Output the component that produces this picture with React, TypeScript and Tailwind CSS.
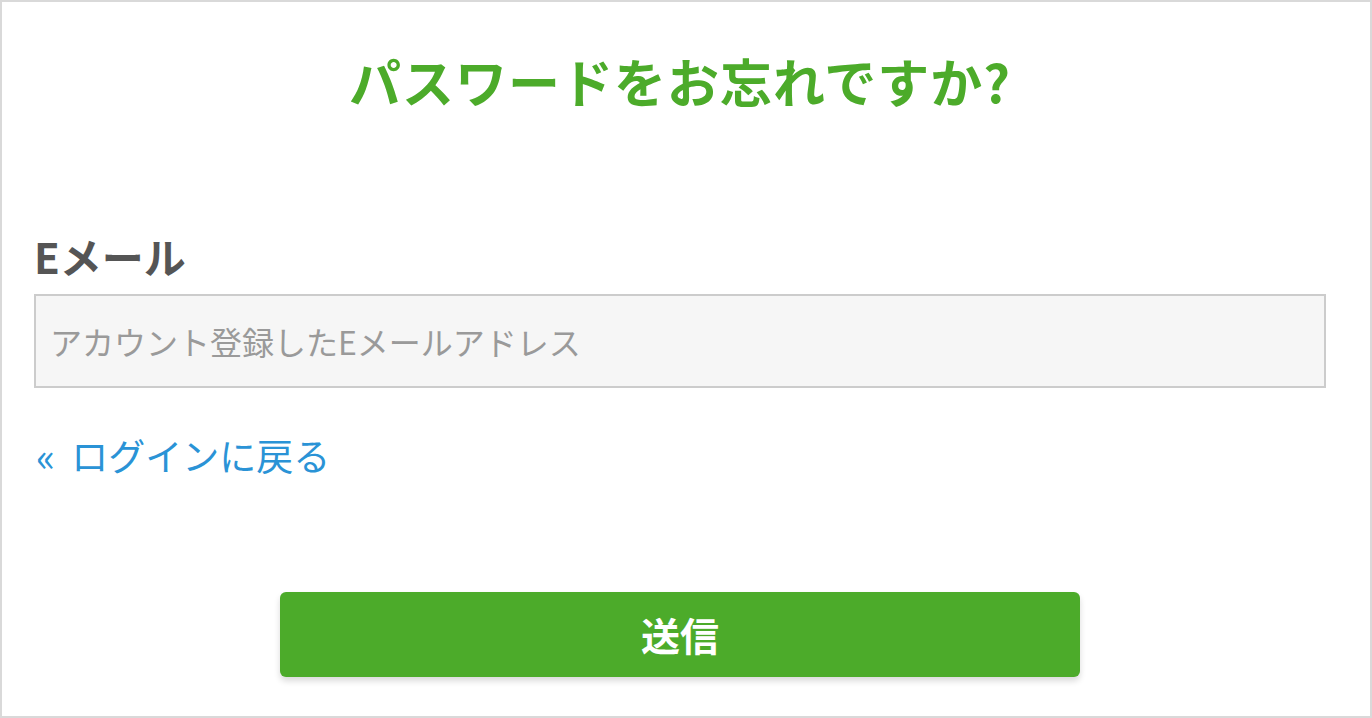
export default function App() {
  return (
    <div
      className="h-[718px] w-[1372px] border-2 border-[#d9d9d9] bg-white pl-[32px] pr-[44px]"
      style={{ fontFamily: '"Noto Sans CJK JP", "Noto Sans", sans-serif' }}
    >
      <h1 className="pt-[53px] text-center text-[52px] font-bold leading-[52px] tracking-[1px] text-[#4cab2a]">
        パスワードをお忘れですか?
      </h1>

      <label className="mt-[128px] block text-[42px] font-bold leading-[42px] text-[#555555]">
        Eメール
      </label>
      <input
        type="email"
        placeholder="アカウント登録したEメールアドレス"
        className="mt-[17px] h-[94px] w-full border-2 border-[#cccccc] bg-[#f6f6f6] px-[14px] text-[32px] text-[#555] outline-none placeholder:text-[#9a9a9a]"
      />

      <a
        href="#"
        className="mt-[49px] flex items-center text-[37px] leading-[37px] text-[#2a93d6]"
      >
        <span className="ml-[2px] mr-[16px] text-[40px] leading-[37px]">«</span>
        ログインに戻る
      </a>

      <div className="mt-[118px] flex justify-center">
        <button className="h-[85px] w-[800px] rounded-[6px] bg-[#4cab2a] text-[39px] font-bold text-white shadow-[0_4px_6px_rgba(0,0,0,0.15)]">
          送信
        </button>
      </div>
    </div>
  );
}
